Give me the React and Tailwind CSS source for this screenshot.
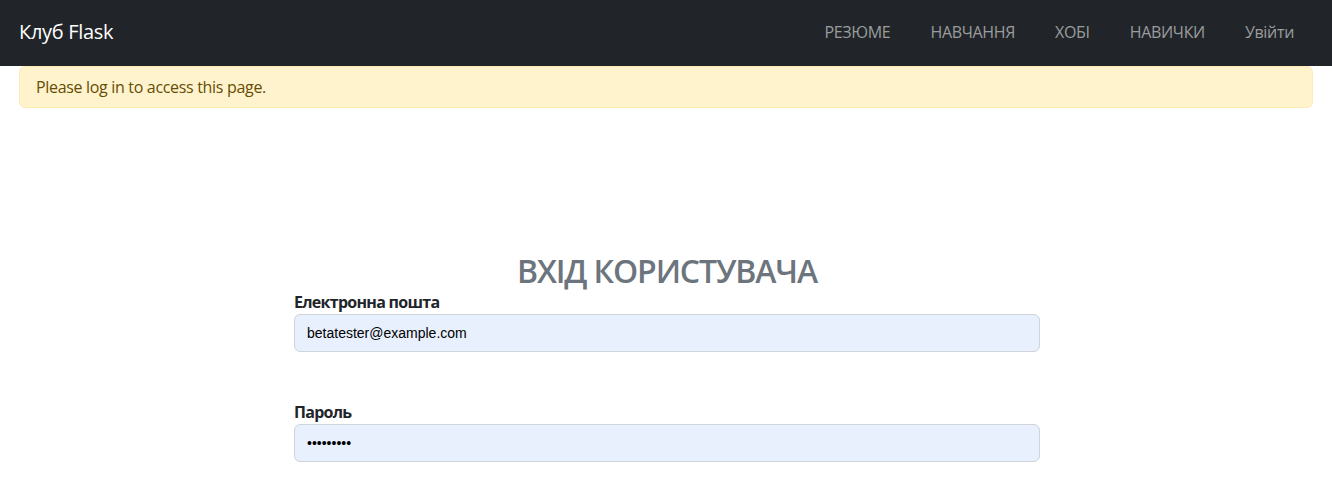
export default function App() {
  const font = { fontFamily: '"Open Sans", "Noto Sans", sans-serif' };
  return (
    <div className="min-h-screen bg-white tracking-[-0.02em]" style={font}>
      <nav className="h-[66px] bg-[#212529] flex items-center justify-between pl-[19px] pr-[18px] pb-[3px]">
        <a className="text-white text-[20px] leading-none">Клуб Flask</a>
        <ul className="flex items-center text-[16px] text-[#9a9c9e]">
          <li className="px-5">РЕЗЮМЕ</li>
          <li className="px-5">НАВЧАННЯ</li>
          <li className="px-5">ХОБІ</li>
          <li className="px-5">НАВИЧКИ</li>
          <li className="px-5">Увійти</li>
        </ul>
      </nav>

      <div className="px-[19px]">
        <div className="bg-[#fff3cd] border border-[#ffecb5] rounded-[6px] text-[#664d03] text-[16px] leading-6 py-2 px-4">
          Please log in to access this page.
        </div>
      </div>

      <div className="flex justify-center pl-[2px] mt-[144px]">
        <div className="w-[746px]">
          <h2 className="text-center text-[32px] font-semibold leading-[1.2] text-[#6c757d] tracking-[-0.035em]">ВХІД КОРИСТУВАЧА</h2>
          <form className="flex flex-col">
            <label className="font-bold text-[16px] leading-6 text-[#212529] tracking-[-0.045em]">Електронна пошта</label>
            <input
              type="email"
              defaultValue="betatester@example.com"
              className="h-[38px] w-full bg-[#e8f0fe] border border-[#ced4da] rounded-[6px] px-3 text-[14px] text-black outline-none tracking-normal"
              style={{ fontFamily: '"Liberation Sans", Arial, sans-serif' }}
            />
            <label className="mt-[48px] font-bold text-[16px] leading-6 text-[#212529] tracking-[-0.045em]">Пароль</label>
            <input
              type="password"
              defaultValue="123456789"
              className="h-[38px] w-full bg-[#e8f0fe] border border-[#ced4da] rounded-[6px] px-3 text-[14px] text-black outline-none tracking-normal"
              style={{ fontFamily: '"Liberation Sans", Arial, sans-serif' }}
            />
          </form>
        </div>
      </div>
    </div>
  );
}
